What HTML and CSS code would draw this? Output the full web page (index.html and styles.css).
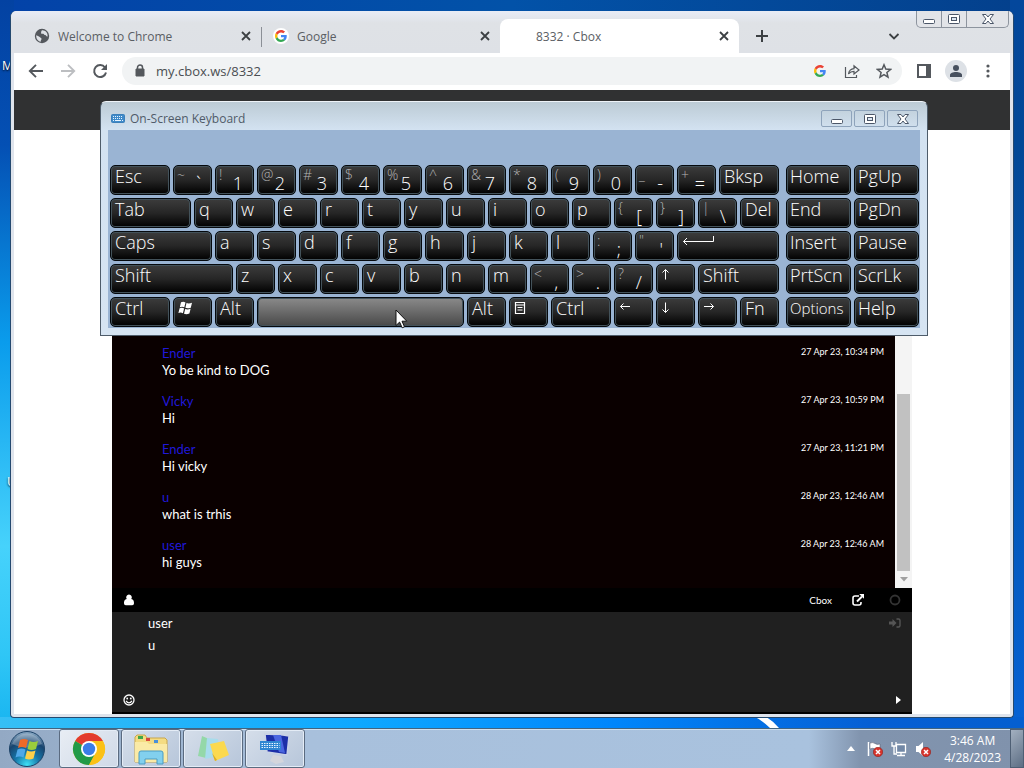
FILE: index.html
```html
<!DOCTYPE html>
<html lang="en">
<head>
<meta charset="utf-8">
<title>8332 · Cbox</title>
<link rel="stylesheet" href="styles.css">
</head>
<body>
<svg class="defs" aria-hidden="true">
  <defs>
    <symbol id="x" viewBox="0 0 16 16"><path d="M4 4l8 8M12 4l-8 8" fill="none" stroke="#3c4043" stroke-width="1.8"/></symbol>
    <symbol id="google" viewBox="0 0 48 48">
      <path fill="#ea4335" d="M24 9.500c3.500 0 6.700 1.200 9.200 3.600l6.900-6.900C35.900 2.400 30.500 0 24 0 14.600 0 6.500 5.400 2.600 13.200l8 6.200C12.400 13.700 17.700 9.500 24 9.500z"/>
      <path fill="#4285f4" d="M47 24.500c0-1.600-.2-3.100-.4-4.500H24v9h12.900c-.6 3-2.300 5.500-4.800 7.200l7.700 6C44.400 38 47 31.800 47 24.500z"/>
      <path fill="#fbbc05" d="M10.500 28.600c-.5-1.500-.8-3-.8-4.600s.3-3.100.8-4.600l-8-6.200C.9 16.500 0 20.100 0 24s.9 7.500 2.600 10.800z"/>
      <path fill="#34a853" d="M24 48c6.500 0 11.900-2.100 15.900-5.800l-7.700-6c-2.200 1.500-4.900 2.300-8.200 2.300-6.300 0-11.600-4.200-13.500-9.900l-8 6.200C6.500 42.600 14.600 48 24 48z"/>
    </symbol>
    <symbol id="win-min" viewBox="0 0 14 12"><rect x="1.500" y="6.500" width="11" height="4" rx="1" fill="#fff" stroke="#4b5668"/></symbol>
    <symbol id="win-max" viewBox="0 0 14 12"><rect x="1.500" y="1.500" width="11" height="9" rx="1" fill="#fff" stroke="#4b5668"/><rect x="4.500" y="4.500" width="5" height="3" fill="#dbe6f2" stroke="#4b5668"/></symbol>
    <symbol id="win-close" viewBox="0 0 14 12"><path d="M1.500 1.500h3.500l2 2.500 2-2.500h3.500L9 6l3.500 4.500H9L7 8l-2 2.500H1.500L5 6z" fill="#fff" stroke="#4b5668"/></symbol>
    <symbol id="bad" viewBox="0 0 10 10"><circle cx="5" cy="5" r="4.700" fill="#d8342c" stroke="#8e1e1a" stroke-width=".6"/><path d="M3 3l4 4M7 3L3 7" stroke="#fff" stroke-width="1.500"/></symbol>
  </defs>
</svg>

<div class="desktop">
  <div class="workspace">
    <span class="icon-label label-top">M</span>
    <span class="icon-label label-mid">U</span>
    <svg class="streak" viewBox="0 0 30 12"><path d="M0 0h12q8 5 14 12H17Q9 4 0 0z" fill="#fff"/></svg>

    <section class="browser" aria-label="Chrome">
      <div class="caption">
        <button aria-label="Minimize"><svg width="14" height="12"><use href="#win-min"/></svg></button>
        <button aria-label="Maximize"><svg width="14" height="12"><use href="#win-max"/></svg></button>
        <button class="wide" aria-label="Close"><svg width="14" height="12"><use href="#win-close"/></svg></button>
      </div>
      <div class="tabs">
        <div class="tab">
          <svg width="16" height="16" viewBox="0 0 16 16"><circle cx="8" cy="8" r="7.200" fill="#54585d"/><path d="M2.200 7.200C4 8 5.200 8.200 6 9.200s1.600.6 1.500 1.800-1 1.400-.7 2.800C3.800 13.200 2 10.500 2.200 7.200zM8 2.200c-1.200.9-.4 1.800-1 2.500s1 1.400 2 1.100 1.100 1.300 2.200 1.300.8 1.700 2.400 1.300C14 5 11.500 2 8 2.200z" fill="#dee1e6"/></svg>
          <span class="tab-title">Welcome to Chrome</span>
          <button class="tab-close" aria-label="Close tab"><svg width="16" height="16"><use href="#x"/></svg></button>
        </div>
        <div class="tab divided">
          <span class="favicon"><svg width="12" height="12"><use href="#google"/></svg></span>
          <span class="tab-title">Google</span>
          <button class="tab-close" aria-label="Close tab"><svg width="16" height="16"><use href="#x"/></svg></button>
        </div>
        <div class="tab active">
          <span class="blank"></span>
          <span class="tab-title">8332 · Cbox</span>
          <button class="tab-close" aria-label="Close tab"><svg width="16" height="16"><use href="#x"/></svg></button>
        </div>
        <button class="new-tab" aria-label="New tab"><svg width="14" height="14" viewBox="0 0 14 14"><path d="M7 1v12M1 7h12" stroke="#3c4043" stroke-width="2"/></svg></button>
        <button class="tab-search" aria-label="Search tabs"><svg width="12" height="12" viewBox="0 0 12 12"><path d="M1.500 4L6 8.500 10.500 4" fill="none" stroke="#3c4043" stroke-width="1.800"/></svg></button>
      </div>
      <div class="toolbar">
        <button class="tool" aria-label="Back"><svg width="16" height="16" viewBox="0 0 16 16"><path d="M15 8H2M8 1.800L1.800 8 8 14.200" fill="none" stroke="#54585d" stroke-width="1.900"/></svg></button>
        <button class="tool" aria-label="Forward"><svg width="16" height="16" viewBox="0 0 16 16"><path d="M1 8h13M8 1.800L14.200 8 8 14.200" fill="none" stroke="#bcbec1" stroke-width="1.900"/></svg></button>
        <button class="tool" aria-label="Reload"><svg width="16" height="16" viewBox="0 0 16 16"><path d="M13 4.500A6 6 0 1 0 14 9.500" fill="none" stroke="#54585d" stroke-width="2"/><path d="M15 1v6H9z" fill="#54585d"/></svg></button>
        <div class="omnibox">
          <svg width="10" height="14" viewBox="0 0 10 14"><path d="M1 5h8v7H1z" fill="#54585d" stroke="#54585d" stroke-linejoin="round"/><path d="M2.500 5V3.500a2.500 2.500 0 0 1 5 0V5" fill="none" stroke="#54585d" stroke-width="1.500"/></svg>
          <input class="url" aria-label="Address" value="my.cbox.ws/8332">
          <button class="tool" aria-label="Google Lens"><svg width="12" height="12"><use href="#google"/></svg></button>
          <button class="tool" aria-label="Share"><svg width="16" height="16" viewBox="0 0 16 16"><path d="M1.500 4v10.500h11V12M4.500 11C5 7.500 7 5.800 10 5.600V2.800L15 7l-5 4V8.300C7.500 8.300 6 9 4.500 11z" fill="none" stroke="#54585d" stroke-width="1.200"/></svg></button>
          <button class="tool" aria-label="Bookmark"><svg width="16" height="16" viewBox="0 0 16 16"><path d="M8 1.800l1.800 4.300 4.700.4-3.600 3 1.100 4.600L8 11.600l-4 2.500 1.100-4.600-3.600-3 4.700-.4z" fill="none" stroke="#54585d" stroke-width="1.500"/></svg></button>
        </div>
        <button class="tool" aria-label="Side panel"><svg width="14" height="14" viewBox="0 0 14 14"><path d="M1 1h12v12H1z" fill="#fff" stroke="#54585d" stroke-width="2"/><path d="M9 1h4v12H9z" fill="#54585d"/></svg></button>
        <button class="tool" aria-label="Profile"><svg width="22" height="22" viewBox="0 0 22 22"><circle cx="11" cy="11" r="11" fill="#dde1e6"/><circle cx="11" cy="8" r="3" fill="#47505e"/><path d="M5 17v-2c0-2 3-3 6-3s6 1 6 3v2z" fill="#47505e"/></svg></button>
        <button class="tool" aria-label="Menu"><svg width="4" height="14" viewBox="0 0 4 14"><g fill="#54585d"><circle cx="2" cy="2" r="1.600"/><circle cx="2" cy="7" r="1.600"/><circle cx="2" cy="12" r="1.600"/></g></svg></button>
      </div>
      <div class="page">
        <header class="site-bar"></header>
        <main class="chat">
          <div class="log">
            <div class="messages">
              <article class="message"><div><a class="who" href="#">Ender</a><p>Yo be kind to DOG</p></div><time>27 Apr 23, 10:34 PM</time></article>
              <article class="message"><div><a class="who" href="#">Vicky</a><p>Hi</p></div><time>27 Apr 23, 10:59 PM</time></article>
              <article class="message"><div><a class="who" href="#">Ender</a><p>Hi vicky</p></div><time>27 Apr 23, 11:21 PM</time></article>
              <article class="message"><div><a class="who" href="#">u</a><p>what is trhis</p></div><time>28 Apr 23, 12:46 AM</time></article>
              <article class="message"><div><a class="who" href="#">user</a><p>hi guys</p></div><time>28 Apr 23, 12:46 AM</time></article>
            </div>
            <div class="scroll">
              <div class="thumb"></div>
              <svg width="8" height="5" viewBox="0 0 8 5"><path d="M0 0h8L4 4.500z" fill="#a0a0a0"/></svg>
            </div>
          </div>
          <div class="chat-bar">
            <button class="plain" aria-label="Users"><svg width="12" height="12" viewBox="0 0 12 12"><path d="M6 .5a2.800 2.800 0 0 1 2.300 4.400c1.900.4 2.700 1.900 2.700 4.100 0 1.500-.7 2.200-1.800 2.200H2.800C1.700 11.200 1 10.500 1 9c0-2.200.8-3.700 2.700-4.100A2.800 2.800 0 0 1 6 .5z" fill="#fff"/></svg></button>
            <span class="grow"></span>
            <a class="brand" href="#">Cbox</a>
            <button class="plain" aria-label="Pop out"><svg width="12" height="12" viewBox="0 0 12 12"><path d="M7 2H3Q1 2 1 4v5q0 2 2 2h4q2 0 2-2V8" fill="none" stroke="#fff" stroke-width="1.600"/><path d="M5 7.500L10 2.500" stroke="#fff" stroke-width="2"/><path d="M7.200 0H12v4.800z" fill="#fff"/></svg></button>
            <button class="plain" aria-label="Status"><svg width="12" height="12" viewBox="0 0 12 12"><circle cx="6" cy="6" r="4.500" fill="none" stroke="#333" stroke-width="1.800"/></svg></button>
          </div>
          <form class="compose">
            <div class="line"><input aria-label="Name" value="user"><button class="plain" type="button" aria-label="Sign in"><svg width="12" height="10" viewBox="0 0 12 10"><path d="M0 3.500h3.500V1l4 4-4 4V6.500H0z" fill="#555"/><path d="M7.500 1h2Q11 1 11 2.500v5Q11 9 9.500 9h-2" fill="none" stroke="#555" stroke-width="1.400"/></svg></button></div>
            <div class="line"><input aria-label="Message" value="u"></div>
            <div class="actions">
              <button class="plain" type="button" aria-label="Smilies"><svg width="12" height="12" viewBox="0 0 12 12"><circle cx="6" cy="6" r="5" fill="none" stroke="#fff" stroke-width="1.300"/><circle cx="4.200" cy="4.500" r=".9" fill="#fff"/><circle cx="7.800" cy="4.500" r=".9" fill="#fff"/><path d="M3 6.800q3 4 6 0" fill="none" stroke="#fff" stroke-width="1.200"/></svg></button>
              <button class="plain" type="button" aria-label="Send"><svg width="5" height="8" viewBox="0 0 5 8"><path d="M0 0l5 4-5 4z" fill="#fff"/></svg></button>
            </div>
          </form>
        </main>
      </div>
    </section>

    <section class="osk" aria-label="On-Screen Keyboard">
      <div class="osk-title">
        <svg width="14" height="9" viewBox="0 0 14 9"><rect x=".5" y=".5" width="13" height="8" rx="1" fill="#3f8ac9" stroke="#3b7fba"/><path d="M2 2.500h10M2 4.500h10" stroke="#e6f3ff" stroke-dasharray="1 1"/><path d="M2 6.500h1M4 6.500h6M11 6.500h1" stroke="#e6f3ff"/></svg>
        <h1>On-Screen Keyboard</h1>
        <button aria-label="Minimize"><svg width="14" height="12"><use href="#win-min"/></svg></button>
        <button aria-label="Maximize"><svg width="14" height="12"><use href="#win-max"/></svg></button>
        <button aria-label="Close"><svg width="14" height="12"><use href="#win-close"/></svg></button>
      </div>
      <div class="board">
        <div class="keys">
          <button class="key w3">Esc</button><button class="key two"><i>~</i><b>`</b></button><button class="key two"><i>!</i><b>1</b></button><button class="key two"><i>@</i><b>2</b></button><button class="key two"><i>#</i><b>3</b></button><button class="key two"><i>$</i><b>4</b></button><button class="key two"><i>%</i><b>5</b></button><button class="key two"><i>^</i><b>6</b></button><button class="key two"><i>&amp;</i><b>7</b></button><button class="key two"><i>*</i><b>8</b></button><button class="key two"><i>(</i><b>9</b></button><button class="key two"><i>)</i><b>0</b></button><button class="key two"><i>_</i><b>-</b></button><button class="key two"><i>+</i><b>=</b></button><button class="key w3">Bksp</button>

          <button class="key w4">Tab</button><button class="key">q</button><button class="key">w</button><button class="key">e</button><button class="key">r</button><button class="key">t</button><button class="key">y</button><button class="key">u</button><button class="key">i</button><button class="key">o</button><button class="key">p</button><button class="key two"><i>{</i><b>[</b></button><button class="key two"><i>}</i><b>]</b></button><button class="key two"><i>|</i><b>\</b></button><button class="key">Del</button>

          <button class="key w5">Caps</button><button class="key">a</button><button class="key">s</button><button class="key">d</button><button class="key">f</button><button class="key">g</button><button class="key">h</button><button class="key">j</button><button class="key">k</button><button class="key">l</button><button class="key two"><i>:</i><b>;</b></button><button class="key two"><i>"</i><b>'</b></button><button class="key w5" aria-label="Enter"><svg width="33" height="12" viewBox="0 0 33 12"><path d="M31.500 1v5.500H1.500M5 3L1.500 6.500 5 10" fill="none" stroke="#fff"/></svg></button>

          <button class="key w6">Shift</button><button class="key">z</button><button class="key">x</button><button class="key">c</button><button class="key">v</button><button class="key">b</button><button class="key">n</button><button class="key">m</button><button class="key two"><i>&lt;</i><b>,</b></button><button class="key two"><i>&gt;</i><b>.</b></button><button class="key two"><i>?</i><b>/</b></button><button class="key" aria-label="Up"><svg width="10" height="12" viewBox="0 0 10 12"><path d="M4.500 11.500V1.500M1.500 4.500l3-3 3 3" fill="none" stroke="#fff"/></svg></button><button class="key w4">Shift</button>

          <button class="key w3">Ctrl</button><button class="key" aria-label="Windows"><svg width="16" height="14" viewBox="0 0 16 14"><g fill="#fff"><path d="M3 1.300q2.400-1 4.500.2L6.300 6.300Q4.200 5.200 1.800 6.200z"/><path d="M8.500 2q2.200 1 5.500-.2L12.800 6.700Q9.500 7.800 7.400 6.800z"/><path d="M1.600 7.300Q4 6.300 6.100 7.400L4.900 12.200Q2.800 11 .4 12z"/><path d="M7.200 7.900q2.200 1 5.400-.1l-1.200 4.800q-3.200 1.100-5.400.1z"/></g></svg></button><button class="key">Alt</button><button class="key w10 space" aria-label="Space"></button><button class="key">Alt</button><button class="key" aria-label="Menu key"><svg width="12" height="14" viewBox="0 0 12 14"><path d="M1.500 1.500h9v11h-9zM1.500 4h9M3.500 6.500h5M3.500 9h5" fill="none" stroke="#fff" stroke-width="1.200"/></svg></button><button class="key w3">Ctrl</button><button class="key" aria-label="Left"><svg width="12" height="12" viewBox="0 0 12 12"><path d="M11 5.500H1.500M4.500 2.500l-3 3 3 3" fill="none" stroke="#fff"/></svg></button><button class="key" aria-label="Down"><svg width="10" height="12" viewBox="0 0 10 12"><path d="M4.500 1.500v10M1.500 8.500l3 3 3-3" fill="none" stroke="#fff"/></svg></button><button class="key" aria-label="Right"><svg width="12" height="12" viewBox="0 0 12 12"><path d="M1 5.500h9.500M7.500 2.500l3 3-3 3" fill="none" stroke="#fff"/></svg></button><button class="key">Fn</button>
        </div>
        <div class="nav-keys">
          <button class="key">Home</button><button class="key">PgUp</button>
          <button class="key">End</button><button class="key">PgDn</button>
          <button class="key">Insert</button><button class="key">Pause</button>
          <button class="key">PrtScn</button><button class="key">ScrLk</button>
          <button class="key small">Options</button><button class="key">Help</button>
        </div>
      </div>
    </section>

    <svg class="cursor" width="13" height="20" viewBox="0 0 13 20"><path d="M1 1v15.500l3.600-3.400 2.600 5.700 2.300-1-2.500-5.600h4.800z" fill="#fff" stroke="#111"/></svg>
  </div>

  <footer class="taskbar">
    <button class="start" aria-label="Start">
      <svg width="38" height="38" viewBox="0 0 38 38">
        <defs><radialGradient id="orb" cx=".5" cy=".95" r=".9"><stop offset="0" stop-color="#3fe0f5"/><stop offset=".4" stop-color="#1576a8"/><stop offset=".75" stop-color="#18446e"/><stop offset="1" stop-color="#7fa0bd"/></radialGradient></defs>
        <circle cx="19" cy="19" r="17.500" fill="url(#orb)" stroke="#1c4267"/>
        <path d="M4 14a16 16 0 0 1 30 0Q19 21 4 14z" fill="#fff" opacity=".25"/>
        <path d="M12 10q4-2 8 0l-2 8q-4-2-8 0z" fill="#ee6a28"/><path d="M21.500 11q4 2 8.500 0l-2 8q-4.500 2-8.500 0z" fill="#9bce3c"/><path d="M9.500 19.500q4-2 8 0l-2 8q-4-2-8 0z" fill="#4fa8e8"/><path d="M19 20.500q4 2 8.500 0l-2 8q-4.500 2-8.500 0z" fill="#fdd04a"/>
      </svg>
    </button>
    <button class="task lit" aria-label="Chrome">
      <svg width="34" height="34" viewBox="0 0 34 34"><circle cx="17" cy="17" r="16" fill="#fbc116"/><path d="M17 17L3.140 9A16 16 0 0 1 30.860 9z" fill="#e33b2e"/><path d="M3.140 9A16 16 0 0 0 17 33l6.500-12.200L17 17z" fill="#229a48"/><path d="M17 9h13.860A16 16 0 0 1 17 33l6.900-12z" fill="#fbc116"/><circle cx="17" cy="17" r="8" fill="#fff"/><circle cx="17" cy="17" r="6.200" fill="#3b7de8"/></svg>
    </button>
    <button class="task" aria-label="Explorer">
      <svg width="34" height="32" viewBox="0 0 34 32"><path d="M1 4l2-2h8l2 3h18l2 2v22H1z" fill="#f4dc83" stroke="#c9a64a"/><path d="M4 3h5v3H4z" fill="#3fa648"/><path d="M12 5h4v3h-4z" fill="#d8473c"/><path d="M20 7h4v3h-4z" fill="#4a90d9"/><path d="M1 9h12l2 2h18v18H1z" fill="#faeaa6"/><path d="M5 31V20q0-2 2-2h20q2 0 2 2v11h-6v-5H11v5z" fill="#82d0ee" stroke="#4a9cc4"/></svg>
    </button>
    <button class="task" aria-label="Sticky Notes">
      <svg width="34" height="30" viewBox="0 0 34 30"><path d="M6 2l7 3-3 19-8-2z" fill="#94d8a8"/><path d="M11 4l11 1 2 17-15 3z" fill="#a8dcec"/><path d="M14 10l14-3 5 14-14 6z" fill="#fbd94f"/><path d="M19 27l-3-8 5 7z" fill="#dcae22"/></svg>
    </button>
    <button class="task" aria-label="On-Screen Keyboard">
      <svg width="32" height="32" viewBox="0 0 32 32"><path d="M6 1l18 1 6 1-2 19-20-3z" fill="#1c2fa8" stroke="#c9d2e6" stroke-width="1.500"/><path d="M14 2h8l4 18-6-1z" fill="#4a66e0"/><path d="M14 22l8 1 3 6-8 2-6-3z" fill="#d4d6dc"/><rect x="1" y="8" width="21" height="9" fill="#2f86d2"/><path d="M2.500 10.500h18M2.500 12.500h18M2.500 14.500h18" stroke="#e8f4ff" stroke-dasharray="1.500 1"/></svg>
    </button>
    <span class="grow"></span>
    <div class="tray">
      <button class="plain" aria-label="Show hidden icons"><svg width="8" height="5" viewBox="0 0 8 5"><path d="M4 0l4 5H0z" fill="#fff"/></svg></button>
      <button class="plain" aria-label="Action Center"><svg width="16" height="16" viewBox="0 0 16 16"><path d="M1.500 1v14" stroke="#fff" stroke-width="1.500"/><path d="M3 2q3-1 5 .5t5 .5v6q-3 .5-5-1t-5 0z" fill="#fff" stroke="#556" stroke-width=".5"/><use href="#bad" x="6" y="6" width="10" height="10"/></svg></button>
      <button class="plain" aria-label="Network"><svg width="16" height="16" viewBox="0 0 16 16"><path d="M5.500 3.500h9v8h-9z" fill="#7288a6" stroke="#fff" stroke-width="1.300"/><path d="M6 14.500h8M10 12v2M1 1v4h4V1M3 5v8h3" fill="none" stroke="#fff" stroke-width="1.300"/></svg></button>
      <button class="plain" aria-label="Volume"><svg width="16" height="16" viewBox="0 0 16 16"><path d="M1 5h2.500L8 1v14l-4.500-4H1z" fill="#fff"/><use href="#bad" x="6" y="6" width="10" height="10"/></svg></button>
      <button class="clock"><span>3:46 AM</span><span>4/28/2023</span></button>
    </div>
    <button class="peek" aria-label="Show desktop"></button>
  </footer>
</div>
</body>
</html>
```
FILE: styles.css
```css
* { box-sizing: border-box; }
body { margin: 0; font-family: "Open Sans", "Noto Sans", sans-serif; font-size: 12px; overflow: hidden; }
button, input { font: inherit; color: inherit; background: none; border: 0; padding: 0; margin: 0; }
svg { display: block; flex: none; }
p, h1 { margin: 0; font-size: inherit; font-weight: normal; }
a { text-decoration: none; }
.defs { position: absolute; width: 0; height: 0; }
.grow { flex: 1; }
.plain { display: flex; align-items: center; justify-content: center; }

.desktop { display: flex; flex-direction: column; height: 100vh; background: #0560c8; }
.workspace {
  position: relative; flex: 1; overflow: hidden;
  background:
    linear-gradient(90deg, #36bff5, #0ea8ff 35%, #0086fb 60%, #055fd4 85%, #045fd0) bottom / 100% 11px no-repeat,
    linear-gradient(#0342a2, #0450b4 20%, #0a9cec 47%, #46d2fb 75%, #2fc6f6 90%, #18b4f0) left / 14px 100% no-repeat,
    linear-gradient(#03479c, #024896 20%, #0456b4 60%, #0662d4) right / 14px 100% no-repeat,
    linear-gradient(90deg, #0342a8, #0252a8 50%, #04408c);
}
.icon-label { position: absolute; color: #fff; text-shadow: 0 1px 2px #000; line-height: 16px; }
.label-top { left: 2px; top: 58px; }
.label-mid { left: 7px; top: 474px; }
.streak { position: absolute; right: 241px; bottom: 0; width: 30px; height: 12px; }

/* Browser window */
.browser {
  position: absolute; inset: 11px 10px 10px; display: flex; flex-direction: column;
  border: 1px solid #24496f; border-top: 0; border-radius: 6px 6px 4px 4px; padding: 0 3px 3px;
  background: #dfe4ec; overflow: hidden;
}
.caption { position: absolute; right: 4px; top: 0; display: flex; border: 1px solid #8d949e; border-top: 0; border-radius: 0 0 5px 5px; background: #e2e4e8; }
.caption button { width: 25px; height: 16px; display: flex; align-items: center; justify-content: center; border-right: 1px solid #8d949e; }
.caption .wide { width: 41px; border: 0; }
.tabs { display: flex; height: 42px; margin: 0 -3px; padding: 8px 8px 0 11px; background: linear-gradient(#e8ecf6, #dfe2e6 12px, #dee1e6); }
.tab { flex: 0 1 239px; min-width: 0; display: flex; align-items: center; gap: 8px; padding: 0 7px 0 12px; color: #5a5e64; }
.tab-title { flex: 1; white-space: nowrap; overflow: hidden; }
.tab.divided { background: linear-gradient(#8b8f96, #8b8f96) left 8px / 1px 20px no-repeat; }
.tab.active { background: #fff; border-radius: 8px 8px 0 0; }
.tab-close { width: 16px; height: 16px; }
.favicon { width: 16px; height: 16px; display: flex; align-items: center; justify-content: center; background: #fff; border-radius: 8px; }
.blank { width: 16px; }
.new-tab { width: 28px; margin-left: 9px; display: flex; align-items: center; justify-content: center; }
.tab-search { width: 28px; margin-left: auto; margin-right: 97px; display: flex; align-items: center; justify-content: center; }
.toolbar { display: flex; align-items: center; gap: 4px; height: 37px; padding: 0 8px 2px; background: #fff; }
.tool { width: 28px; height: 28px; display: flex; align-items: center; justify-content: center; }
.omnibox { flex: 1; display: flex; align-items: center; gap: 4px; height: 28px; margin: 0 4px; padding: 0 4px 0 13px; border-radius: 14px; background: #f1f3f4; }
.url { flex: 1; min-width: 0; margin-left: 7px; font-size: 13px; color: #4a4e52; }

/* Page */
.page { flex: 1; min-height: 0; display: flex; flex-direction: column; background: #fff; }
.site-bar { height: 40px; background: #303132; }
.chat { flex: 1; min-height: 0; width: 100%; max-width: 800px; margin: 0 auto; display: flex; flex-direction: column; font-family: Lato, sans-serif; font-size: 13px; color: #fff; }
.log { flex: 1; min-height: 0; display: flex; background: #0a0000; }
.messages { flex: 1; display: flex; flex-direction: column; justify-content: flex-end; gap: 14px; padding: 0 11px 17px 50px; overflow: hidden; }
.message { display: flex; justify-content: space-between; line-height: 17px; }
.who { color: #2018d8; }
.message time { font-size: 9px; line-height: 14px; }
.scroll { width: 17px; background: #f4f4f4; display: flex; flex-direction: column; align-items: center; justify-content: flex-end; gap: 6px; padding-bottom: 6px; }
.thumb { width: 13px; height: 177px; background: #c1c1c1; }
.chat-bar { display: flex; align-items: center; height: 24px; padding: 0 11px; background: #000; }
.brand { color: #fff; font-size: 10px; margin-right: 20px; }
.chat-bar .plain + .plain { margin-left: 25px; }
.compose { display: flex; flex-direction: column; height: 102px; padding: 0 11px 6px; background: #202020; border-bottom: 2px solid #000; }
.line { display: flex; align-items: center; height: 22px; padding-left: 25px; }
.line input { flex: 1; min-width: 0; }
.actions { display: flex; justify-content: space-between; align-items: center; margin-top: auto; }

/* On-screen keyboard */
.osk {
  position: absolute; left: 100px; top: 101px; width: 828px; padding: 0 7px 7px;
  border: 1px solid #4e5c6a; border-top-color: #eef3f8; border-radius: 6px 6px 0 0;
  background: linear-gradient(#bccbd5, #d3e2f1 28px, #d6e4f2);
}
.osk-title { display: flex; align-items: center; gap: 2px; height: 28px; padding: 5px 2px 0 3px; color: #505b69; }
.osk-title h1 { flex: 1; margin-left: 3px; }
.osk-title button { width: 31px; height: 17px; display: flex; align-items: center; justify-content: center; border: 1px solid #8ea3bb; border-radius: 2px; }
.board { display: flex; gap: 7px; padding: 35px 1px 1px 2px; background: #9ab4d3; }
.keys { flex: 669; display: grid; grid-template-columns: repeat(32, 1fr); gap: 3px; }
.nav-keys { flex: 133; display: grid; grid-template-columns: 1fr 1fr; gap: 3px; }
.key {
  grid-column: span 2; min-width: 0; height: 30px; display: flex; align-items: flex-start; padding: 0 0 0 4px; overflow: hidden;
  border: 1px solid #05090d; border-radius: 5px; box-shadow: inset 0 0 0 1px #43525a;
  background: linear-gradient(#3c3c3c, #262626 50%, #000); color: #fff; font-size: 18px; font-weight: 300; line-height: 21px; text-align: left;
}
.nav-keys .key { grid-column: auto; padding-left: 3px; }
.key svg { margin-top: 3px; }
.key.w3 { grid-column: span 3; }
.key.w4 { grid-column: span 4; }
.key.w5 { grid-column: span 5; }
.key.w6 { grid-column: span 6; }
.key.w10 { grid-column: span 10; }
.key.space { background: linear-gradient(#8a8a8a, #6a6a6a 50%, #484848); }
.nav-keys .key.small { font-size: 15px; line-height: 20px; }
.key.two { justify-content: space-between; padding: 0 10px 0 3px; }
.key i { font-style: normal; font-size: 14px; line-height: 18px; color: #b4b4b4; }
.key b { font-weight: 300; line-height: 34px; }
.cursor { position: absolute; left: 395px; top: 309px; }

/* Taskbar */
.taskbar {
  display: flex; height: 40px; padding-left: 8px; border-top: 1px solid #42647f; box-shadow: inset 0 1px #cfe0f0;
  background: linear-gradient(90deg, #93a9c4, #a8c0dc 30%, #a9c2de 79%, #8194ae 84%, #8092ac);
}
.start { width: 38px; margin-right: 13px; display: flex; align-items: center; }
.task {
  width: 60px; margin-right: 2px; display: flex; align-items: center; justify-content: center;
  border: 1px solid #5b6b80; border-radius: 3px; box-shadow: inset 0 0 0 1px #e4ecf6;
  background: linear-gradient(135deg, #d5deea, #b7c6da);
}
.task.lit { background: linear-gradient(135deg, #e8edf4, #cfd9e7); }
.tray { display: flex; align-items: center; gap: 8px; color: #fff; }
.tray .plain:first-child { margin-right: 4px; }
.clock { display: flex; flex-direction: column; align-items: center; margin: 0 9px 0 5px; line-height: 17px; }
.peek { width: 14px; border: 1px solid #4e5f74; background: linear-gradient(135deg, #a3b0c0, #5d6e84); }
```
